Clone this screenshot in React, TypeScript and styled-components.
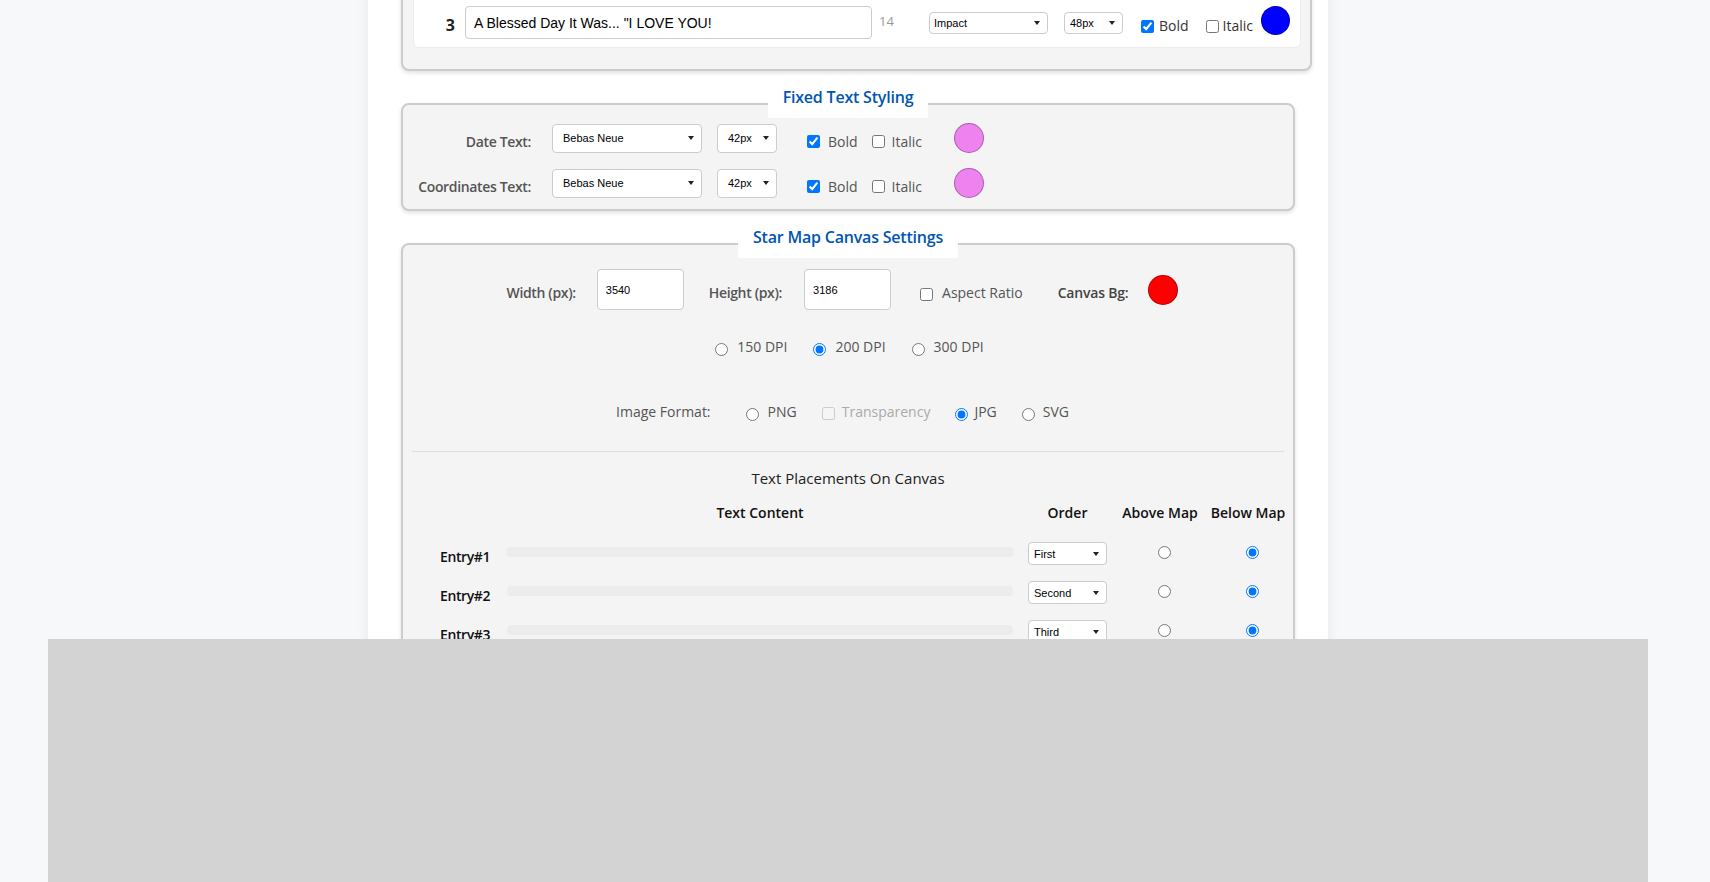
import React from "react";
import styled, { createGlobalStyle, css } from "styled-components";

const GlobalStyle = createGlobalStyle`
  html, body { margin: 0; padding: 0; height: 100%; overflow: hidden; }
  body {
    background: #f7f8fa;
    font-family: "Open Sans", "Noto Sans", sans-serif;
    color: #333;
  }
  * { box-sizing: border-box; }
`;

const Page = styled.div`
  height: 100vh;
  overflow: hidden;
  padding-right: 14px;
`;

const Sheet = styled.main`
  width: 960px;
  min-height: 1100px;
  margin: -52px auto 0;
  padding: 0 33px;
  background: #fff;
  box-shadow: 0 0 12px rgba(0, 0, 0, 0.07);
`;

const Section = styled.section<{ $wide?: boolean }>`
  margin-bottom: 8px;
  ${(p) =>
    p.$wide &&
    css`
      margin-right: -17px;
    `}
`;

const SectionTitle = styled.h2`
  display: table;
  position: relative;
  z-index: 1;
  margin: 0 auto -15px;
  padding: 6px 15px 9px;
  background: #fff;
  font-size: 16px;
  line-height: 24px;
  font-weight: 600;
  letter-spacing: -0.2px;
  color: #0056b3;
`;

const Panel = styled.div<{ $padding: string }>`
  background: #f4f4f4;
  border: 2px solid #cccccc;
  border-radius: 8px;
  box-shadow: 0 2px 4px rgba(0, 0, 0, 0.12);
  padding: ${(p) => p.$padding};
`;

/* ---------- shared controls ---------- */

const SelectShell = styled.span<{ $w: number; $h: number; $ml?: number; $mt?: number }>`
  position: relative;
  display: inline-block;
  flex: none;
  width: ${(p) => p.$w}px;
  height: ${(p) => p.$h}px;
  margin-left: ${(p) => p.$ml ?? 0}px;
  margin-top: ${(p) => p.$mt ?? 0}px;
  &::after {
    content: "";
    position: absolute;
    right: 8px;
    top: 50%;
    margin-top: -2px;
    border-left: 3px solid transparent;
    border-right: 3px solid transparent;
    border-top: 4px solid #222;
    pointer-events: none;
  }
`;

const NativeSelect = styled.select<{ $padX: number }>`
  appearance: none;
  -webkit-appearance: none;
  display: block;
  width: 100%;
  height: 100%;
  margin: 0;
  padding: 0 18px 0 ${(p) => p.$padX}px;
  border: 1px solid #ccc;
  border-radius: 4px;
  background: #fff;
  font-family: "Liberation Sans", Arial, sans-serif;
  font-size: 11px;
  color: #000;
  outline: none;
`;

type DropdownProps = {
  value: string;
  options: string[];
  w: number;
  h: number;
  padX?: number;
  ml?: number;
  mt?: number;
};

function Dropdown({ value, options, w, h, padX = 5, ml, mt }: DropdownProps) {
  return (
    <SelectShell $w={w} $h={h} $ml={ml} $mt={mt}>
      <NativeSelect $padX={padX} defaultValue={value}>
        {options.map((o) => (
          <option key={o}>{o}</option>
        ))}
      </NativeSelect>
    </SelectShell>
  );
}

const CheckLabel = styled.label<{
  $gap: number;
  $ml?: number;
  $mt?: number;
  $tone?: string;
  $shift?: number;
}>`
  display: inline-flex;
  align-items: center;
  flex: none;
  gap: ${(p) => p.$gap}px;
  margin-left: ${(p) => p.$ml ?? 0}px;
  margin-top: ${(p) => p.$mt ?? 0}px;
  font-size: 14px;
  line-height: 20px;
  color: ${(p) => p.$tone ?? "#555"};
  white-space: nowrap;
  input {
    flex: none;
    margin: ${(p) => p.$shift ?? 0}px 0 0 0;
  }
`;

const Swatch = styled.span<{ $color: string; $size: number; $ml?: number; $mt?: number }>`
  flex: none;
  width: ${(p) => p.$size}px;
  height: ${(p) => p.$size}px;
  margin-left: ${(p) => p.$ml ?? 0}px;
  margin-top: ${(p) => p.$mt ?? 0}px;
  border-radius: 50%;
  background: ${(p) => p.$color};
  border: 1px solid rgba(0, 0, 0, 0.28);
`;

/* ---------- section 1 : custom text entries ---------- */

const EntryCard = styled.div`
  background: #fff;
  border: 1px solid #ececec;
  border-radius: 6px;
  padding: 45px 10px 8px 0;
`;

const EntryRow = styled.div`
  display: flex;
  align-items: flex-start;
  height: 33px;
`;

const EntryNumber = styled.span`
  flex: none;
  width: 41px;
  margin-top: 8px;
  text-align: right;
  font-size: 16px;
  line-height: 22px;
  font-weight: 700;
  color: #222;
`;

const PhraseInput = styled.input`
  flex: none;
  width: 407px;
  height: 33px;
  margin-left: 10px;
  padding: 0 8px;
  border: 1px solid #ccc;
  border-radius: 4px;
  background: #fff;
  font-family: "Liberation Sans", Arial, sans-serif;
  font-size: 14px;
  color: #000;
  outline: none;
`;

const Counter = styled.span`
  flex: none;
  width: 50px;
  margin-left: 7px;
  margin-top: 6px;
  font-size: 13px;
  line-height: 18px;
  color: #9a9a9a;
`;

/* ---------- section 2 : fixed text styling ---------- */

const StyleRows = styled.div`
  display: flex;
  flex-direction: column;
  gap: 15px;
`;

const StyleRow = styled.div`
  display: flex;
  align-items: center;
  height: 30px;
`;

const StyleLabel = styled.span`
  flex: none;
  width: 120px;
  margin-top: 7px;
  text-align: right;
  font-size: 14px;
  line-height: 20px;
  font-weight: 600;
  letter-spacing: -0.35px;
  color: #555;
  white-space: nowrap;
`;

/* ---------- section 3 : canvas settings ---------- */

const DimRow = styled.div`
  display: flex;
  justify-content: center;
  align-items: center;
  height: 41px;
  padding-right: 11px;
`;

const FieldLabel = styled.span<{ $ml?: number; $strong?: boolean }>`
  flex: none;
  margin-left: ${(p) => p.$ml ?? 0}px;
  margin-top: 7px;
  font-size: 14px;
  line-height: 20px;
  font-weight: 600;
  letter-spacing: ${(p) => (p.$strong ? "-0.2px" : "-0.35px")};
  color: ${(p) => (p.$strong ? "#444" : "#555")};
  white-space: nowrap;
`;

const DimInput = styled.input<{ $ml: number }>`
  flex: none;
  width: 87px;
  height: 41px;
  margin-left: ${(p) => p.$ml}px;
  padding: 0 8px;
  border: 1px solid #ccc;
  border-radius: 4px;
  background: #fff;
  font-family: "Liberation Sans", Arial, sans-serif;
  font-size: 11px;
  color: #000;
  outline: none;
`;

const OptionRow = styled.div<{ $mt: number; $gap: number; $offset?: number }>`
  display: flex;
  justify-content: center;
  align-items: center;
  gap: ${(p) => p.$gap}px;
  height: 20px;
  margin-top: ${(p) => p.$mt}px;
  padding-left: ${(p) => Math.max(0, p.$offset ?? 0)}px;
  padding-right: ${(p) => Math.max(0, -(p.$offset ?? 0))}px;
`;

const PlainLabel = styled.span`
  flex: none;
  margin-right: 10px;
  font-size: 14px;
  line-height: 20px;
  color: #555;
`;

const Divider = styled.div`
  height: 1px;
  margin-top: 29px;
  background: #dddddd;
`;

const PlacementTitle = styled.h3`
  margin: 15px 0 0;
  text-align: center;
  font-size: 15px;
  line-height: 22px;
  font-weight: 500;
  color: #222;
`;

const placementColumns = css`
  display: grid;
  grid-template-columns: 67px 518px 97px 88px 88px;
`;

const PlacementTable = styled.div`
  margin: 14px 0 0 22px;
`;

const PlacementHead = styled.div`
  ${placementColumns};
  margin-bottom: 19px;
`;

const HeadCell = styled.span`
  text-align: center;
  font-size: 14px;
  line-height: 20px;
  font-weight: 600;
  color: #111;
  white-space: nowrap;
`;

const PlacementBody = styled.div`
  display: flex;
  flex-direction: column;
  gap: 16px;
`;

const PlacementRow = styled.div`
  ${placementColumns};
  align-items: start;
  height: 23px;
`;

const EntryName = styled.span`
  margin-top: 5px;
  padding-left: 6px;
  font-size: 14px;
  line-height: 20px;
  font-weight: 600;
  letter-spacing: -0.4px;
  color: #111;
  white-space: nowrap;
`;

const PreviewBar = styled.div`
  height: 10px;
  margin: 5px 6px 0;
  border-radius: 4px;
  background: #ececec;
`;

const CellCenter = styled.div`
  display: flex;
  justify-content: center;
`;

const PlacementRadio = styled.input`
  margin: 4px 0 0 8px;
`;

const BottomBanner = styled.div`
  position: fixed;
  left: 48px;
  top: 639px;
  bottom: 0;
  width: 1600px;
  background: #d3d3d3;
  z-index: 10;
`;

const fontOptions = ["Impact", "Bebas Neue", "Arial", "Georgia"];
const sizeOptions = ["42px", "48px", "36px", "24px"];
const orderOptions = ["First", "Second", "Third"];

const placements = [
  { name: "Entry#1", order: "First" },
  { name: "Entry#2", order: "Second" },
  { name: "Entry#3", order: "Third" },
];

export default function App() {
  return (
    <Page>
      <GlobalStyle />
      <Sheet>
        <Section $wide>
          <Panel $padding="10px 9px 21px 10px">
            <EntryCard>
              <EntryRow>
                <EntryNumber>3</EntryNumber>
                <PhraseInput defaultValue={'A Blessed Day It Was... "I LOVE YOU!'} />
                <Counter>14</Counter>
                <Dropdown value="Impact" options={fontOptions} w={119} h={22} padX={4} mt={6} />
                <Dropdown value="48px" options={sizeOptions} w={59} h={22} padX={5} ml={16} mt={6} />
                <CheckLabel $gap={5} $ml={18} $mt={10} $tone="#333">
                  <input type="checkbox" defaultChecked />
                  Bold
                </CheckLabel>
                <CheckLabel $gap={4} $ml={17} $mt={10} $tone="#333">
                  <input type="checkbox" />
                  Italic
                </CheckLabel>
                <Swatch $color="#0000ff" $size={29} $ml={8} />
              </EntryRow>
            </EntryCard>
          </Panel>
        </Section>

        <Section>
          <SectionTitle>Fixed Text Styling</SectionTitle>
          <Panel $padding="18px 8px 11px">
            <StyleRows>
              {["Date Text:", "Coordinates Text:"].map((label) => (
                <StyleRow key={label}>
                  <StyleLabel>{label}</StyleLabel>
                  <Dropdown value="Bebas Neue" options={fontOptions} w={150} h={29} padX={10} ml={21} />
                  <Dropdown value="42px" options={sizeOptions} w={60} h={29} padX={10} ml={15} />
                  <CheckLabel $gap={8} $ml={30} $mt={7}>
                    <input type="checkbox" defaultChecked />
                    Bold
                  </CheckLabel>
                  <CheckLabel $gap={7} $ml={14} $mt={7}>
                    <input type="checkbox" />
                    Italic
                  </CheckLabel>
                  <Swatch $color="#ee82ee" $size={30} $ml={32} />
                </StyleRow>
              ))}
            </StyleRows>
          </Panel>
        </Section>

        <Section>
          <SectionTitle>Star Map Canvas Settings</SectionTitle>
          <Panel $padding="24px 9px 60px">
            <DimRow>
              <FieldLabel>Width (px):</FieldLabel>
              <DimInput $ml={21} defaultValue="3540" />
              <FieldLabel $ml={25}>Height (px):</FieldLabel>
              <DimInput $ml={22} defaultValue="3186" />
              <CheckLabel $gap={9} $ml={29} $mt={7} $shift={3}>
                <input type="checkbox" />
                Aspect Ratio
              </CheckLabel>
              <FieldLabel $ml={35} $strong>
                Canvas Bg:
              </FieldLabel>
              <Swatch $color="#ff0000" $size={30} $ml={20} />
            </DimRow>

            <OptionRow $mt={27} $gap={26} $offset={3}>
              <CheckLabel $gap={9} $shift={5}>
                <input type="radio" name="dpi" />
                150 DPI
              </CheckLabel>
              <CheckLabel $gap={9} $shift={5}>
                <input type="radio" name="dpi" defaultChecked />
                200 DPI
              </CheckLabel>
              <CheckLabel $gap={9} $shift={5}>
                <input type="radio" name="dpi" />
                300 DPI
              </CheckLabel>
            </OptionRow>

            <OptionRow $mt={45} $gap={25} $offset={-11}>
              <PlainLabel>Image Format:</PlainLabel>
              <CheckLabel $gap={9} $shift={4}>
                <input type="radio" name="fmt" />
                PNG
              </CheckLabel>
              <CheckLabel $gap={7} $shift={2} $tone="#aaa">
                <input type="checkbox" disabled />
                Transparency
              </CheckLabel>
              <CheckLabel $gap={6} $shift={4}>
                <input type="radio" name="fmt" defaultChecked />
                JPG
              </CheckLabel>
              <CheckLabel $gap={8} $shift={4}>
                <input type="radio" name="fmt" />
                SVG
              </CheckLabel>
            </OptionRow>

            <Divider />
            <PlacementTitle>Text Placements On Canvas</PlacementTitle>

            <PlacementTable>
              <PlacementHead>
                <HeadCell />
                <HeadCell>Text Content</HeadCell>
                <HeadCell>Order</HeadCell>
                <HeadCell>Above Map</HeadCell>
                <HeadCell>Below Map</HeadCell>
              </PlacementHead>
              <PlacementBody>
                {placements.map((p) => (
                  <PlacementRow key={p.name}>
                    <EntryName>{p.name}</EntryName>
                    <PreviewBar />
                    <CellCenter>
                      <Dropdown value={p.order} options={orderOptions} w={79} h={23} padX={5} />
                    </CellCenter>
                    <CellCenter>
                      <PlacementRadio type="radio" name={`pos-${p.name}`} />
                    </CellCenter>
                    <CellCenter>
                      <PlacementRadio type="radio" name={`pos-${p.name}`} defaultChecked />
                    </CellCenter>
                  </PlacementRow>
                ))}
              </PlacementBody>
            </PlacementTable>
          </Panel>
        </Section>
      </Sheet>
      <BottomBanner />
    </Page>
  );
}
